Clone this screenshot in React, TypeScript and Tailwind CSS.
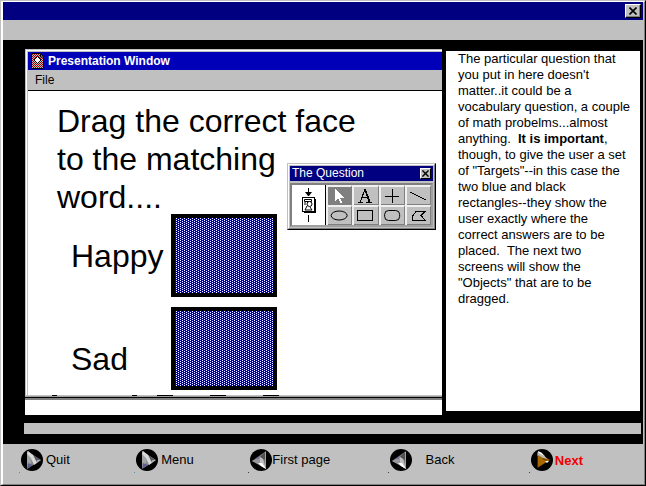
import { Fragment } from 'react';
import type { ReactNode } from 'react';

const tools = [
  { name: 'Select', icon: <path d="M9 3v12l3-3 2 5h2l-2-5h4z" fill="white" stroke="none" /> },
  { name: 'Text', icon: <path d="M6 16h5M14 16h6M8 16L13 3l5 13M9 11h7M13 4l4 12" /> },
  { name: 'Cross', icon: <path d="M13 3v14M6 10h14" /> },
  { name: 'Line', icon: <path d="M5 6l16 8" /> },
  { name: 'Oval', icon: <ellipse cx="13" cy="9.5" rx="8" ry="4.5" shapeRendering="auto" /> },
  { name: 'Rectangle', icon: <rect x="5.5" y="4.5" width="15" height="10" /> },
  { name: 'Rounded rectangle', icon: <rect x="5.5" y="4.5" width="15" height="10" rx="4" shapeRendering="auto" /> },
  { name: 'Polygon', icon: <path d="M11 5.500h9l-4 4 4 5H7v-4z" /> },
];

const notes: ReactNode[] = [
  'The particular question that',
  "you put in here doesn't",
  'matter..it could be a',
  'vocabulary question, a couple',
  'of math probelms...almost',
  <>
    {'anything.  '}
    <b>It is important</b>,
  </>,
  'though, to give the user a set',
  'of "Targets"--in this case the',
  'two blue and black',
  'rectangles--they show the',
  'user exactly where the',
  'correct answers are to be',
  'placed.  The next two',
  'screens will show the',
  '"Objects" that are to be',
  'dragged.',
];

function Target() {
  return (
    <div className="h-[83px] w-[106px] border-4 border-black bg-[#0000b8]">
      <svg className="block h-full w-full" shapeRendering="crispEdges" aria-hidden="true">
        <defs>
          <pattern id="dots" width="4" height="4" patternUnits="userSpaceOnUse">
            <path d="M1 0h1v1h-1zM3 1h1v1h-1zM1 2h1v1h-1zM3 3h1v1h-1z" fill="white" />
          </pattern>
        </defs>
        <rect width="100%" height="100%" fill="url(#dots)" />
      </svg>
    </div>
  );
}

function RightArrow({ gold = false }: { gold?: boolean }) {
  return (
    <svg width="24" height="24" viewBox="0 0 24 24" className="shrink-0" aria-hidden="true">
      <circle cx="13" cy="11" r="11" fill="black" />
      {gold ? (
        <>
          <path d="M8 3l13 8L8 19z" fill="#a86800" />
          <path d="M9 2l6 4 3 4-4-1-5-3z" fill="#b8b8b8" />
          <path d="M9 2l4 2 2 3-5-3zM16 12l4 0-2 2z" fill="white" />
          <path d="M14 9l5 2-2 1-4-2z" fill="#784800" />
          <path d="M8 7h1v12H8z" fill="#900000" />
        </>
      ) : (
        <>
          <path d="M8 2l14 9L8 20z" fill="#88888c" />
          <path d="M8 2l5 7-1 5-4 4z" fill="#a0a4a4" />
          <path d="M14 6l7 5-4 1z" fill="#58585c" />
          <path d="M9 2l5 4 4 8-3 2-3-7-4-4z" fill="#d8d8d8" />
          <path d="M18 11h4l-4 3z" fill="#a8a8b0" />
          <path d="M9 14l5 2-6 4z" fill="#606090" />
        </>
      )}
      <path d="M0 23h1v1H0z" fill={gold ? '#404040' : '#4898a8'} />
    </svg>
  );
}

function LeftArrow() {
  return (
    <svg width="24" height="24" viewBox="0 0 24 24" className="shrink-0" aria-hidden="true">
      <circle cx="13" cy="11" r="11" fill="black" />
      <path d="M18 2v18L4 12z" fill="#787878" />
      <path d="M17 3v8l-5-3z" fill="#505450" />
      <path d="M4 12l8-4 2 3-2 5z" fill="#98989c" />
      <path d="M12 8l3 2 3 10-6-4z" fill="#c0c0c0" />
      <path d="M10 14l4 0 4 6-5-3z" fill="white" />
      <path d="M8 10l3-2v2z" fill="#7070b0" />
      <path d="M17 3h1v14h-1z" fill="#a0a0a0" />
      <path d="M0 23h1v1H0z" fill="#404040" />
    </svg>
  );
}

function NavButton({ icon, children }: { icon: ReactNode; children: ReactNode }) {
  return (
    <button type="button" className="flex items-start whitespace-nowrap text-left">
      {icon}
      {children}
    </button>
  );
}

function CloseIcon({ size }: { size: number }) {
  return (
    <svg width={size} height={size} viewBox="0 0 8 8" stroke="black" strokeWidth="1.6" aria-hidden="true">
      <path d="M.5 .5l7 7M7.500 .5l-7 7" />
    </svg>
  );
}

function QuestionPalette() {
  return (
    <section
      aria-label="The Question"
      className="absolute left-[259px] top-[72px] w-[149px] border border-[#c0c0c0] border-b-black border-r-black bg-[#c0c0c0]"
    >
      <div className="border border-white border-b-[#808080] border-r-[#808080] p-px">
        <div className="flex h-[15px] items-center justify-between bg-[#000080] px-[2px]">
          <h2 className="text-[12px] leading-[15px] text-white">The Question</h2>
          <button
            type="button"
            aria-label="Close palette"
            className="flex h-[11px] w-[11px] items-center justify-center border border-white border-b-black border-r-black bg-[#c0c0c0]"
          >
            <CloseIcon size={7} />
          </button>
        </div>
        <div className="mt-[2px] flex border-2 border-[#808080] border-b-[#a0a0a0] border-r-[#a0a0a0]">
          <div className="flex w-[34px] items-center justify-center border-r border-black bg-white">
            <svg width="20" height="34" viewBox="0 0 20 34" fill="none" stroke="black" aria-hidden="true">
              <path d="M9.500 0v7M9.500 27v7" />
              <path d="M6 4h7l-3 4H9z" fill="black" stroke="none" />
              <rect x="3.500" y="9.500" width="12" height="14" fill="white" />
              <path d="M16.500 11v14M5 24.500h12" />
              <path d="M5.500 11.500h7v2h-7z" />
              <circle cx="10.500" cy="16" r="2.500" fill="white" />
              <path d="M6 14v3M8 18l-2 4h7l-2-3" />
            </svg>
          </div>
          <div className="grid flex-1 grid-cols-4">
            {tools.map((tool) => (
              <button
                key={tool.name}
                type="button"
                aria-label={tool.name}
                className="h-[20px] border-2 border-b-0 border-r border-[#f0f0f0] border-r-[#808080] bg-[#c0c0c0] shadow-[inset_0_-1px_0_#808080] first:bg-[#808080]"
              >
                <svg viewBox="2 1 23 18" className="block h-full w-full" fill="none" stroke="black" shapeRendering="crispEdges" aria-hidden="true">
                  {tool.icon}
                </svg>
              </button>
            ))}
          </div>
        </div>
      </div>
    </section>
  );
}

function PresentationWindow() {
  return (
    <section aria-label="Presentation Window" className="flex min-w-0 flex-1 flex-col bg-white">
      <div className="flex flex-1 flex-col border-l border-t border-[#c0c0c0]">
        <div className="flex flex-1 flex-col border-l border-t border-white">
          <div className="flex flex-1 flex-col border-l border-t border-[#c0c0c0]">
            <div className="flex h-[18px] items-center bg-[#0000b8] pl-[3px]">
              <svg width="13" height="16" viewBox="0 0 13 16" aria-hidden="true">
                <defs>
                  <pattern id="weave" width="2" height="2" patternUnits="userSpaceOnUse">
                    <path d="M0 0h1v1H0zM1 1h1v1H1z" fill="#a00000" />
                  </pattern>
                </defs>
                <path d="M.5 .5h9l3 3v12H.5z" fill="#c0c0c0" />
                <path d="M1 1h8l3 3v11H1z" fill="url(#weave)" />
                <path d="M.5 .5h9l3 3v12H.5z" fill="none" stroke="black" />
                <path d="M6.500 3.500l3.500 3.500-3.500 3.500L3 7z" fill="white" stroke="black" />
                <path d="M9.500 1v3H12" stroke="black" fill="none" />
              </svg>
              <h1 className="pl-1 text-[12px] font-bold leading-[18px] text-white">Presentation Window</h1>
            </div>
            <div className="h-[21px] border-b border-black bg-[#c0c0c0] pl-[7px]">
              <button type="button" className="block text-[12px] leading-[20px]">File</button>
            </div>
            <div className="relative flex-1 pb-[5px] pl-[29px] pt-[11px] text-[32px] leading-[38px]">
              <p>
                Drag the correct face
                <br />
                to the matching
                <br />
                word....
              </p>
              <div className="-mt-0.5 grid grid-cols-[100px_106px] items-center gap-y-[10px] pl-[14px]">
                <p>Happy</p>
                <Target />
                <p className="pt-5">Sad</p>
                <Target />
              </div>
              <QuestionPalette />
            </div>
          </div>
        </div>
      </div>
      <svg className="block h-px w-full bg-[#c0c0c0]" shapeRendering="crispEdges" aria-hidden="true">
        <path d="M27 .5h5M107 .5h5M132 .5h16M185 .5h16M238 .5h16" stroke="black" />
      </svg>
      <div className="h-[4px] border-b-2 border-t border-b-[#808080] border-t-[#a0a0a0] bg-black" />
      <div className="h-[15px]" />
    </section>
  );
}

export default function App() {
  return (
    <div className="border border-[#c0c0c0] border-b-black border-r-black font-['Liberation_Sans',Arial,sans-serif] text-black">
      <div className="flex min-h-[calc(100vh-2px)] flex-col border border-l-2 border-white border-b-[#808080] border-r-[#808080] bg-[#c0c0c0]">
        <header className="mr-px flex h-[18px] items-center justify-end bg-[#000080] pr-[2px]">
          <button
            type="button"
            aria-label="Close"
            className="flex h-[14px] w-[16px] items-center justify-center border border-white border-b-black border-r-black bg-[#c0c0c0] shadow-[inset_-1px_-1px_0_#808080]"
          >
            <CloseIcon size={8} />
          </button>
        </header>
        <div className="h-5" />

        <main className="mr-px flex flex-1 flex-col bg-black pb-[10px] pl-[21px] pr-[2px] pt-[9px]">
          <div className="flex flex-1 pl-px">
            <PresentationWindow />
            <aside className="mb-1 ml-1 mr-px mt-[2px] w-[194px] shrink-0 bg-white pl-3">
              <p className="whitespace-pre text-[13px] leading-[16px]">
                {notes.map((line, i) => (
                  <Fragment key={i}>
                    {line}
                    <br />
                  </Fragment>
                ))}
              </p>
            </aside>
          </div>
          <div className="mt-2 h-[11px] bg-[#c0c0c0]" />
        </main>

        <nav className="grid h-10 grid-cols-[115fr_114fr_139fr_141fr_115fr] pl-4 pt-[5px] text-[13px] leading-[22px]">
          <NavButton icon={<RightArrow />}>
            <span className="pl-[3px]">Quit</span>
          </NavButton>
          <NavButton icon={<RightArrow />}>
            <span className="pl-[3px]">Menu</span>
          </NavButton>
          <NavButton icon={<LeftArrow />}>
            <span>First page</span>
          </NavButton>
          <NavButton icon={<LeftArrow />}>
            <span className="pl-[14px]">Back</span>
          </NavButton>
          <NavButton icon={<RightArrow gold />}>
            <span className="pl-[2px] pt-px font-bold text-[#f00000]">Next</span>
          </NavButton>
        </nav>
      </div>
    </div>
  );
}
